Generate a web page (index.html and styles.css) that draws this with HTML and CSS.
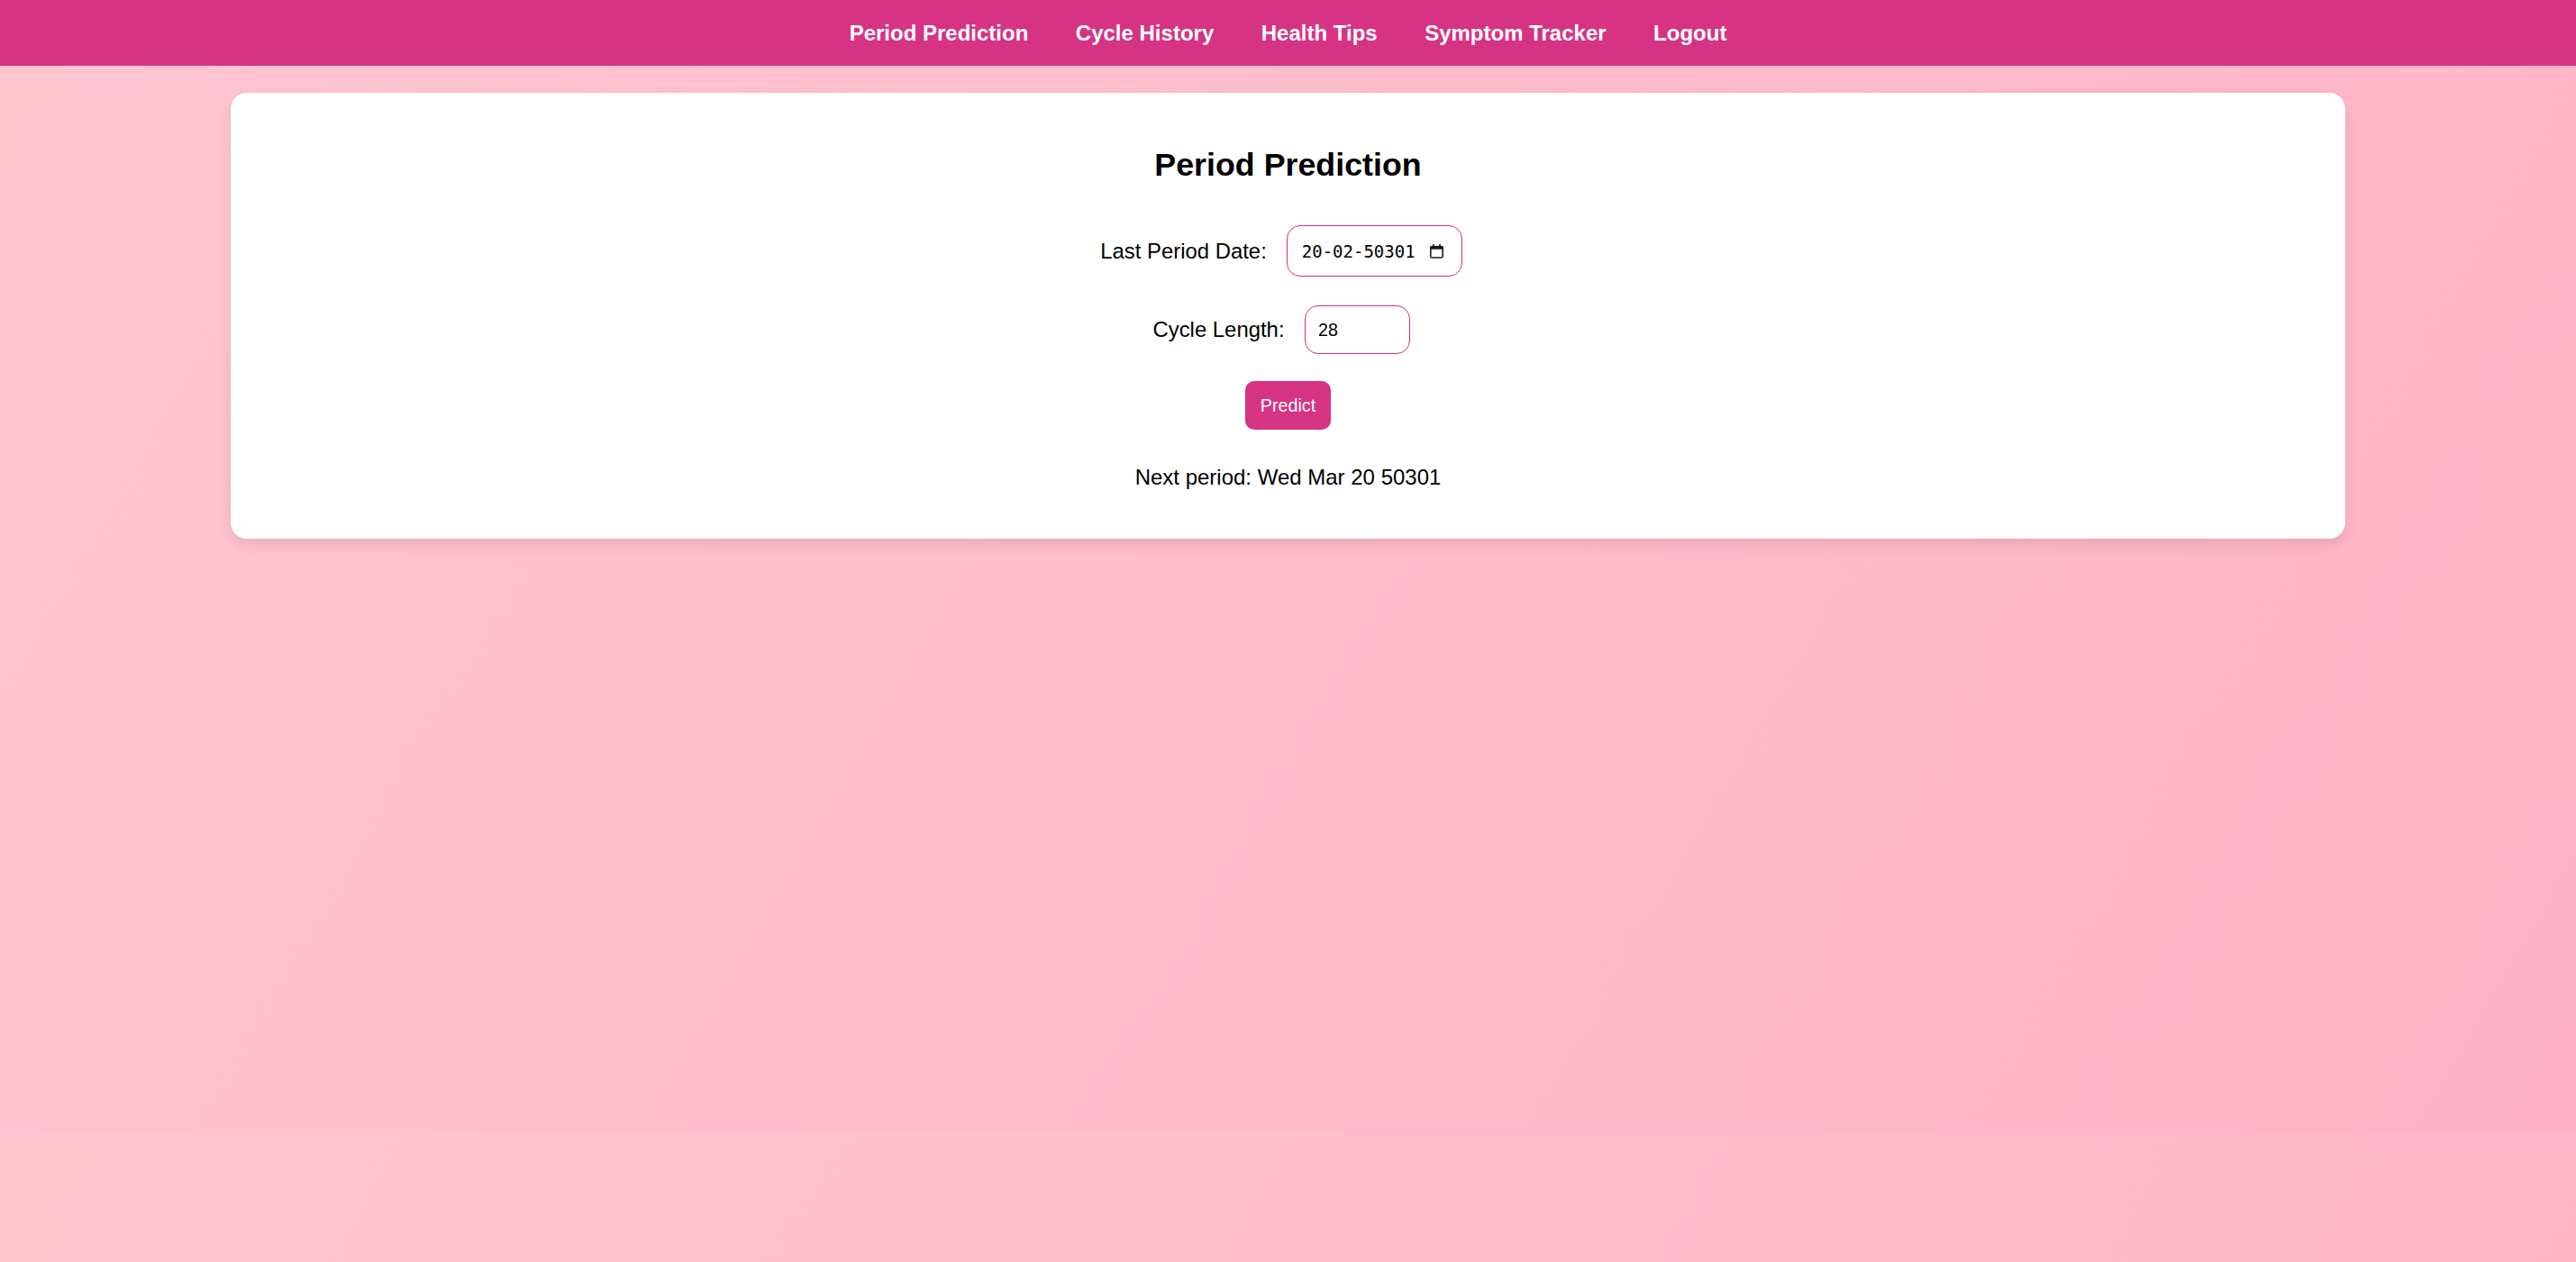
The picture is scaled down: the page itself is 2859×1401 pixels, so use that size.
FILE: index.html
```html
<!DOCTYPE html>
<html lang="en">
<head>
<meta charset="utf-8">
<title>Period Prediction</title>
<link rel="stylesheet" href="styles.css">
</head>
<body>
<nav class="topnav">
  <a class="nav-link" href="#">Period Prediction</a>
  <a class="nav-link" href="#">Cycle History</a>
  <a class="nav-link" href="#">Health Tips</a>
  <a class="nav-link" href="#">Symptom Tracker</a>
  <a class="nav-link" href="#">Logout</a>
</nav>
<main class="card">
  <h2 class="title">Period Prediction</h2>
  <form class="form">
    <div class="row">
      <label class="label">Last Period Date:</label>
      <div class="field date-field">
        <span class="date-text">20-02-50301</span>
        <svg class="cal-icon" width="17" height="16" viewBox="0 0 17 16" aria-hidden="true">
          <rect x="1.8" y="2.8" width="13.4" height="12.2" rx="1.6" fill="none" stroke="#1a1a1a" stroke-width="1.6"/>
          <rect x="1.2" y="2.2" width="14.6" height="3.6" rx="1.2" fill="#1a1a1a"/>
          <rect x="4" y="0.2" width="1.8" height="3" fill="#1a1a1a"/>
          <rect x="11.2" y="0.2" width="1.8" height="3" fill="#1a1a1a"/>
        </svg>
      </div>
    </div>
    <div class="row row-second">
      <label class="label">Cycle Length:</label>
      <input class="field num-field" type="text" value="28">
    </div>
    <button class="btn" type="button">Predict</button>
  </form>
  <p class="result">Next period: Wed Mar 20 50301</p>
</main>
</body>
</html>
```
FILE: styles.css
```css
html {
  margin: 0;
}

body {
  margin: 0;
  min-height: 1258px;
  font-family: "Liberation Sans", Arial, sans-serif;
  color: #000;
  background: linear-gradient(120deg, #ffc6d0 0%, #ffb2c7 100%);
}

.topnav {
  height: 73px;
  background: #d63384;
  display: flex;
  justify-content: center;
  align-items: center;
  gap: 52.5px;
}

.nav-link {
  color: #fff;
  font-weight: bold;
  font-size: 24px;
  text-decoration: none;
  line-height: 28px;
}

.card {
  margin: 30px 256px 0;
  padding: 30px 30px 30px;
  background: #fff;
  border-radius: 18px;
  box-shadow: 0 6px 15px rgba(0, 0, 0, 0.1);
  text-align: center;
}

.title {
  margin: 30px 0 31px;
  font-size: 35.8px;
  line-height: 41px;
  font-weight: bold;
}

.form {
  display: flex;
  flex-direction: column;
  align-items: center;
}

.row {
  display: flex;
  justify-content: center;
  align-items: center;
}

.row-second {
  margin-top: 2px;
}

.label {
  font-size: 23.9px;
  margin-right: 7px;
}

.field {
  box-sizing: border-box;
  margin: 15px;
  border: 1.5px solid #d82a82;
  border-radius: 15px;
  background: #fff;
}

.date-field {
  width: 195px;
  height: 57px;
  display: flex;
  align-items: center;
  padding: 0 18.5px 0 16px;
}

.date-text {
  font-family: "DejaVu Sans Mono", "Liberation Mono", monospace;
  font-size: 19px;
  color: #000;
  white-space: nowrap;
}

.cal-icon {
  display: block;
  margin-left: auto;
}

.num-field {
  width: 117px;
  height: 54px;
  padding: 0 0 0 14.5px;
  font-family: "Liberation Sans", Arial, sans-serif;
  font-weight: normal;
  font-size: 19.7px;
  color: #000;
  outline: none;
}

.btn {
  margin: 15px 0;
  padding: 16px 17px;
  border: none;
  border-radius: 10px;
  background: #d63384;
  color: #fff;
  font-family: "Liberation Sans", Arial, sans-serif;
  font-size: 19.7px;
  line-height: 22px;
  cursor: pointer;
}

.result {
  margin: 24px 0 24px;
  font-size: 24px;
}
```
